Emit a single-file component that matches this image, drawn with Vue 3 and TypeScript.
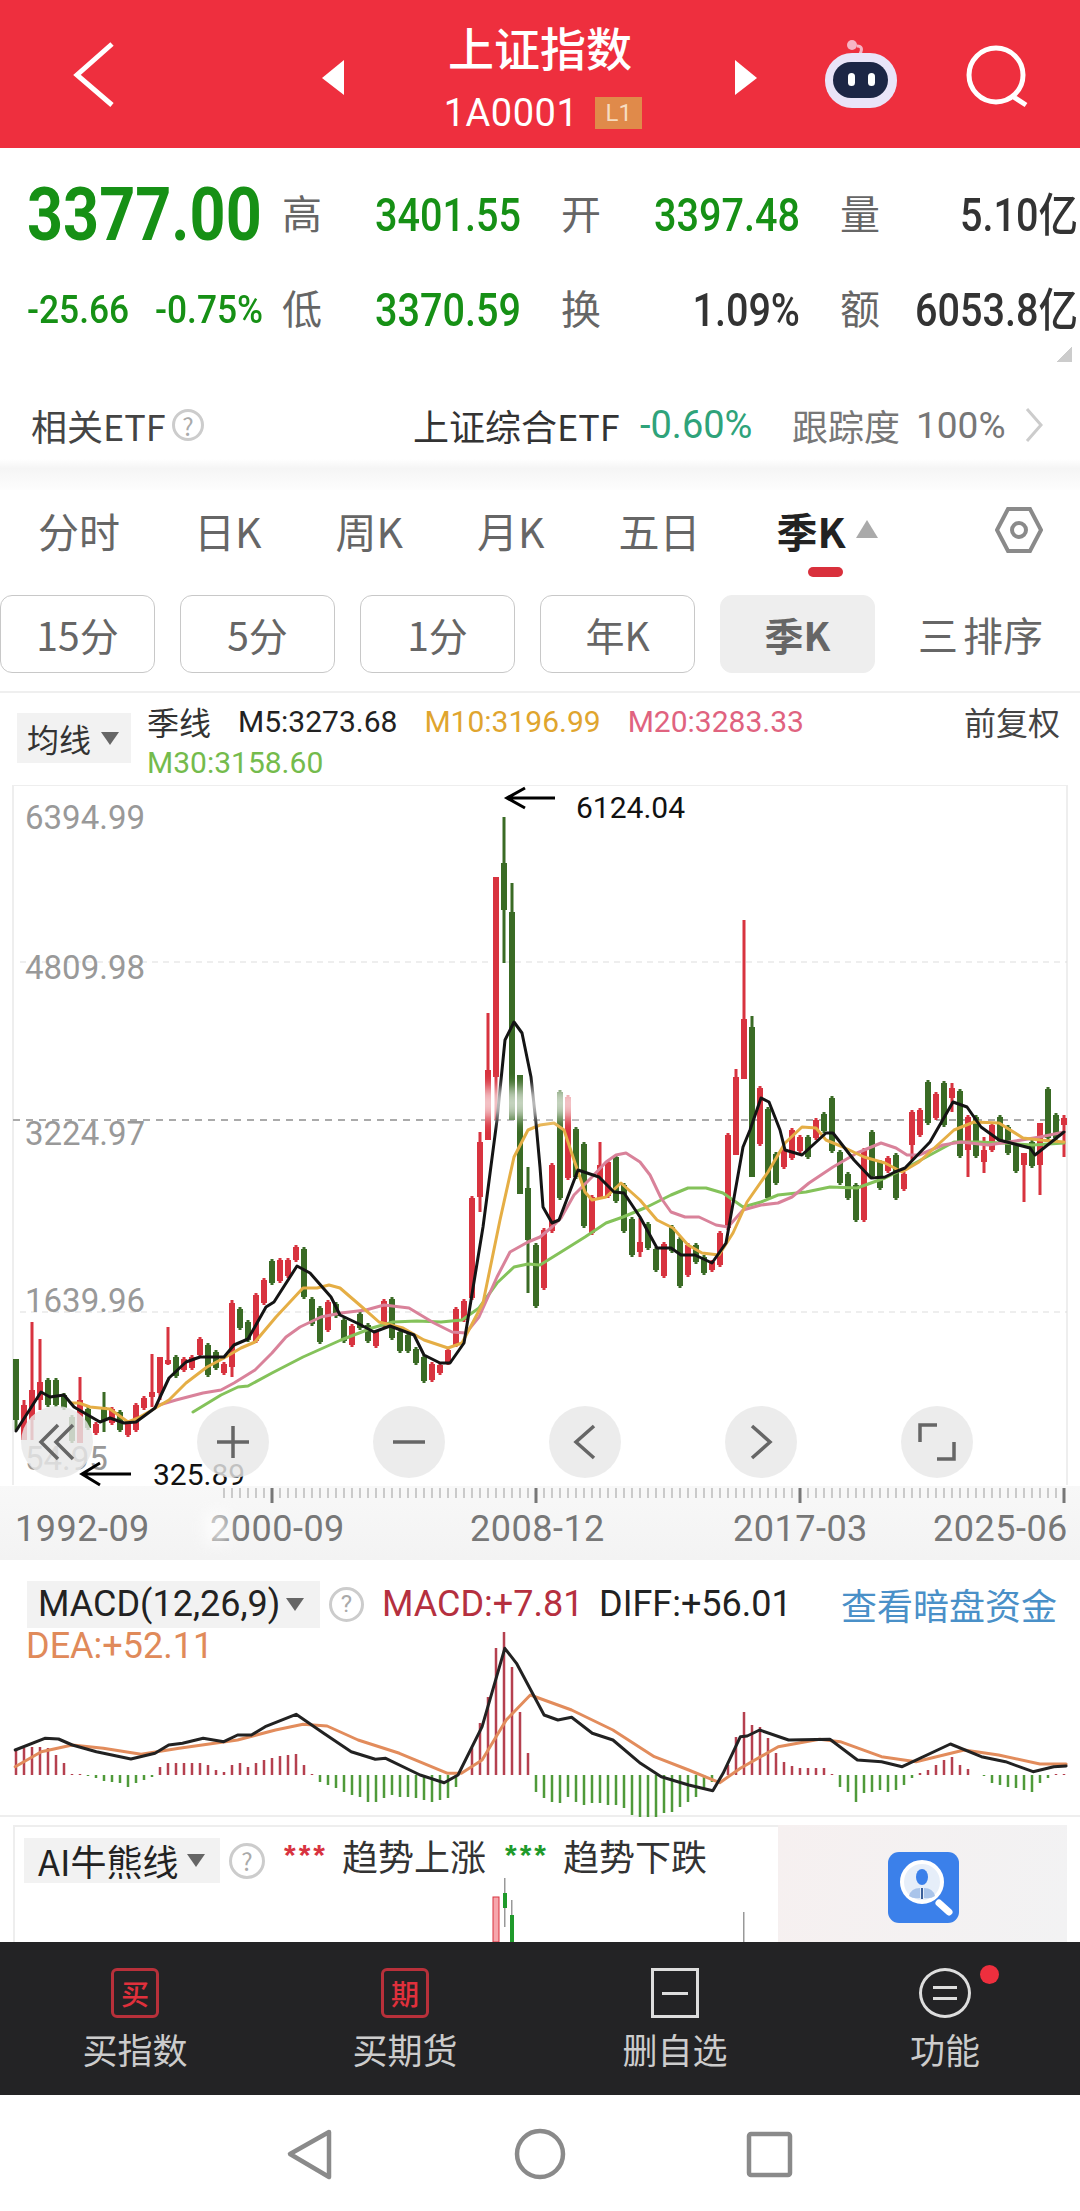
<template>
  <div class="page">
    <header class="top">
      <svg class="top-icons" viewBox="0 0 1080 148">
        <path d="M112 44 L77 75 L112 105" fill="none" stroke="#fff" stroke-width="5" />
        <path d="M344 60 L322 78 L344 95 Z" fill="#fff" />
        <path d="M735 60 L757 78 L735 95 Z" fill="#fff" />
        <path d="M860 54 Q864 46 857 46" fill="none" stroke="#f6b4c4" stroke-width="3" />
        <circle cx="852" cy="45" r="5" fill="#f6b4c4" />
        <rect x="825" y="53" width="72" height="55" rx="27" fill="#e9e4f8" />
        <rect x="833" y="62" width="55" height="36" rx="18" fill="#1c2645" />
        <rect x="848" y="73" width="7" height="13" rx="3.5" fill="#fff" />
        <rect x="868" y="73" width="7" height="13" rx="3.5" fill="#fff" />
        <circle cx="996" cy="75" r="27" fill="none" stroke="#fff" stroke-width="5" />
        <path d="M1012 96 L1026 105" stroke="#fff" stroke-width="5" />
      </svg>
      <div class="title">上证指数</div>
      <div class="code">1A0001<span class="badge">L1</span></div>
    </header>

    <section class="quote">
      <div class="price num">3377.00</div>
      <span class="lbl">高</span><span class="val green num">3401.55</span>
      <span class="lbl">开</span><span class="val green num">3397.48</span>
      <span class="lbl">量</span><span class="val last num">5.10亿</span>
      <div class="change num"><span>-25.66</span><span>-0.75%</span></div>
      <span class="lbl">低</span><span class="val green num">3370.59</span>
      <span class="lbl">换</span><span class="val num">1.09%</span>
      <span class="lbl">额</span><span class="val last num">6053.8亿</span>
      <i class="corner"></i>
    </section>

    <section class="etf">
      <span class="etf-name">相关ETF</span>
      <span class="help small">?</span>
      <span class="etf-main">上证综合ETF</span>
      <span class="etf-pct">-0.60%</span>
      <span class="etf-grey">跟踪度</span>
      <span class="etf-grey">100%</span>
      <svg class="etf-more" viewBox="0 0 20 36"><path d="M3 2 L17 18 L3 34" fill="none" stroke="#ccc" stroke-width="3" /></svg>
    </section>

    <div class="stripe"></div>

    <nav class="tabs">
      <span v-for="t in tabs" :key="t">{{ t }}</span>
      <span class="on">季K<i class="up"></i></span>
      <svg class="hex" viewBox="0 0 48 46">
        <path d="M13 2 H35 L46 23 L35 44 H13 L2 23 Z" fill="none" stroke="#8a8a8a" stroke-width="4" />
        <circle cx="24" cy="23" r="7" fill="none" stroke="#8a8a8a" stroke-width="4" />
      </svg>
    </nav>

    <div class="subtabs">
      <button v-for="t in subTabs" :key="t">{{ t }}</button>
      <button class="active">季K</button>
      <span class="sort"><b>三</b>排序</span>
    </div>

    <section class="legend">
      <span class="drop ma">均线<i class="down"></i></span>
      <div class="ma-values num">
        <span class="cn">季线</span>
        <span>M5:3273.68</span>
        <span class="c-m10">M10:3196.99</span>
        <span class="c-m20">M20:3283.33</span>
        <span class="c-m30">M30:3158.60</span>
      </div>
      <span class="adjust">前复权</span>
    </section>

    <section class="chart">
      <svg class="chart-svg" viewBox="0 785 1080 775">
        <defs>
          <linearGradient id="axisBg" x1="0" y1="0" x2="0" y2="1">
            <stop offset="0" stop-color="#f8f8f8" />
            <stop offset="1" stop-color="#f3f3f3" />
          </linearGradient>
        </defs>
        <rect x="0" y="1486" width="1080" height="74" fill="url(#axisBg)" />
        <path d="M13 785 V1485 M1067 785 V1485 M13 785 H1067" fill="none" stroke="#eee" stroke-width="2" />
        <path d="M20 962 H1067 M20 1312 H1067" stroke="#ddd" stroke-width="1" stroke-dasharray="6 5" />
        <path d="M13 1120 H1067" stroke="#aaa" stroke-width="2" stroke-dasharray="7 6" />

        <text class="axis" x="25" y="829">6394.99</text>
        <text class="axis" x="25" y="979">4809.98</text>
        <text class="axis" x="25" y="1145">3224.97</text>
        <text class="axis" x="25" y="1312">1639.96</text>
        <text class="axis" x="25" y="1470">54.95</text>

        <g v-for="c in bars" :key="c.x" :fill="c.fill">
          <rect :x="c.x - 1.5" :y="c.hi" width="3" :height="c.lo - c.hi" />
          <rect :x="c.x - 3" :y="c.top" width="6" :height="c.bot - c.top" />
        </g>
        <polyline class="line" :points="m30" stroke="#84c25a" />
        <polyline class="line" :points="m20" stroke="#d9829a" />
        <polyline class="line" :points="m10" stroke="#e5ae45" />
        <polyline class="line" :points="m5" stroke="#141414" />

        <rect class="smudge" x="440" y="1088" width="200" height="30" />

        <path v-for="t in ticks" :key="t.x" :d="`M${t.x} 1488 V${t.end}`" :stroke="t.major ? '#777' : '#bbb'" :stroke-width="t.major ? 3 : 1.5" />
        <text class="date" x="15" y="1541">1992-09</text>
        <text class="date" x="210" y="1541">2000-09</text>
        <text class="date" x="470" y="1541">2008-12</text>
        <text class="date" x="733" y="1541">2017-03</text>
        <text class="date" x="933" y="1541">2025-06</text>
        <rect class="smudge" x="205" y="1512" width="24" height="32" />

        <path d="M555 798 H507 M525 788 L507 798 L525 808" fill="none" stroke="#000" stroke-width="3" />
        <text class="note" x="576" y="818">6124.04</text>
        <path d="M131 1474 H82 M100 1463 L82 1474 L100 1485" fill="none" stroke="#000" stroke-width="3" />
        <text class="note" x="153" y="1485">325.89</text>
      </svg>
      <div class="chart-btns">
        <span v-for="b in chartButtons" :key="b">
          <svg viewBox="0 0 40 40"><path :d="b" fill="none" stroke="#666" stroke-width="3.5" /></svg>
        </span>
      </div>
    </section>

    <section class="macd">
      <svg class="macd-svg" viewBox="0 1568 1080 249">
        <rect v-for="b in macdBars" :key="b.x" :x="b.x - 1.25" :y="b.y" width="2.5" :height="b.h" :fill="b.fill" />
        <polyline class="line" :points="dea" stroke="#e28c5c" stroke-width="4" />
        <polyline class="line" :points="diff" stroke="#222" />
      </svg>
      <div class="macd-head num">
        <span class="drop macd-drop">MACD(12,26,9)<i class="down"></i></span>
        <span class="help">?</span>
        <span class="macd-red">MACD:+7.81</span>
        <span class="macd-diff">DIFF:+56.01</span>
        <span class="macd-link">查看暗盘资金</span>
      </div>
      <div class="macd-dea num">DEA:+52.11</div>
    </section>

    <section class="ai">
      <div class="ai-main">
        <svg class="ai-svg" viewBox="0 1825 765 117">
          <rect x="493" y="1897" width="6" height="45" fill="#f6a6ac" stroke="#d8333f" stroke-width="1" />
          <rect x="504" y="1878" width="1.5" height="49" fill="#999" />
          <rect x="503" y="1893" width="4" height="15" fill="#1f9a2b" />
          <rect x="510" y="1915" width="4" height="27" fill="#1f9a2b" />
          <rect x="511" y="1900" width="1.5" height="15" fill="#999" />
          <rect x="743" y="1912" width="1.5" height="30" fill="#999" />
        </svg>
        <div class="ai-head">
          <span class="drop ai-drop">AI牛熊线<i class="down"></i></span>
          <span class="help">?</span>
          <span class="stars red">***</span><span class="trend">趋势上涨</span>
          <span class="stars grn">***</span><span class="trend">趋势下跌</span>
        </div>
      </div>
      <div class="ad">
        <svg viewBox="0 0 71 71">
          <rect width="71" height="71" rx="11" fill="#3b80ea" />
          <path d="M51 51 L61 60" stroke="#fff" stroke-width="7" stroke-linecap="round" />
          <circle cx="34" cy="30" r="20" fill="#e6eef9" stroke="#fff" stroke-width="4" />
          <ellipse cx="34" cy="25" rx="6" ry="8" fill="#3b80ea" />
          <path d="M21 44 Q23 36 32 36 V46 Q25 47 21 44 Z M36 36 Q45 36 47 44 Q43 47 36 46 Z" fill="#a9c4ea" />
          <rect x="33" y="36" width="2" height="11" fill="#3b5f9a" />
        </svg>
      </div>
    </section>

    <footer class="actions">
      <div class="action">
        <span class="act-icon buy">买</span>
        <span>买指数</span>
      </div>
      <div class="action">
        <span class="act-icon buy">期</span>
        <span>买期货</span>
      </div>
      <div class="action">
        <span class="act-icon del"><i></i></span>
        <span>删自选</span>
      </div>
      <div class="action">
        <span class="act-icon fn"><i></i><i></i><em></em></span>
        <span>功能</span>
      </div>
    </footer>

    <div class="sysnav">
      <svg viewBox="0 0 1080 116">
        <path d="M329 37 L290 59 L329 82 Z" fill="none" stroke="#8a8a8a" stroke-width="4.5" stroke-linejoin="round" />
        <circle cx="540" cy="59" r="23" fill="none" stroke="#8a8a8a" stroke-width="4.5" />
        <rect x="749" y="39" width="41" height="41" rx="2" fill="none" stroke="#8a8a8a" stroke-width="4.5" />
      </svg>
    </div>
  </div>
</template>

<script setup lang="ts">
type Candle = [number, number, number, number?, number?]

const tabs = ['分时', '日K', '周K', '月K', '五日']
const subTabs = ['15分', '5分', '1分', '年K']

// [1 red / 0 green, wick top, wick bottom, body top, body bottom], y in page px
const candles: Candle[] = [
  [0, 1359, 1430, 1359, 1420], [1, 1400, 1440, 1405, 1440], [1, 1322, 1440, 1390, 1420], [1, 1339, 1410, 1382, 1400],
  [0, 1378, 1407], [0, 1378, 1407], [0, 1393, 1410], [0, 1415, 1443], [1, 1377, 1443, 1400, 1443], [0, 1407, 1430],
  [1, 1422, 1435], [0, 1392, 1432, 1407, 1420], [1, 1407, 1425], [0, 1410, 1432], [1, 1422, 1437], [1, 1403, 1432],
  [1, 1396, 1410], [1, 1354, 1407, 1392, 1397], [1, 1357, 1400, 1357, 1393], [1, 1327, 1365, 1360, 1364], [0, 1355, 1378],
  [1, 1357, 1372], [1, 1355, 1370], [1, 1337, 1357], [0, 1343, 1377], [0, 1350, 1370], [1, 1362, 1375], [1, 1300, 1377, 1303, 1367],
  [0, 1307, 1330], [0, 1320, 1342], [1, 1293, 1343], [1, 1278, 1305], [0, 1259, 1285], [1, 1258, 1283], [1, 1258, 1278], [1, 1245, 1262],
  [0, 1247, 1299], [0, 1297, 1326], [0, 1306, 1344], [1, 1300, 1332], [0, 1302, 1318], [0, 1318, 1343], [1, 1324, 1347], [0, 1312, 1330],
  [0, 1323, 1343], [1, 1330, 1348], [1, 1299, 1327], [0, 1297, 1340], [0, 1330, 1353], [0, 1333, 1353], [0, 1347, 1365], [0, 1355, 1383],
  [1, 1362, 1382], [1, 1363, 1375], [1, 1348, 1365], [1, 1307, 1347], [1, 1299, 1322], [1, 1196, 1300], [1, 1132, 1212, 1142, 1197],
  [1, 1013, 1140, 1070, 1140], [1, 877, 1120, 877, 1077], [0, 817, 963, 863, 910], [0, 883, 1120, 912, 1120], [0, 1075, 1194, 1075, 1194],
  [0, 1167, 1293, 1188, 1240], [0, 1243, 1308], [1, 1228, 1290], [1, 1163, 1233], [0, 1090, 1200], [1, 1095, 1180], [0, 1127, 1179],
  [0, 1142, 1228], [1, 1195, 1235], [1, 1142, 1198, 1165, 1198], [1, 1160, 1198], [0, 1155, 1203], [0, 1183, 1233], [0, 1217, 1257],
  [1, 1218, 1257, 1242, 1252], [0, 1222, 1250], [0, 1247, 1272], [1, 1242, 1278], [0, 1225, 1253], [0, 1237, 1288], [1, 1243, 1277],
  [0, 1243, 1264], [0, 1255, 1275], [1, 1260, 1272], [1, 1231, 1267], [1, 1133, 1230], [1, 1069, 1155, 1077, 1155], [1, 920, 1079, 1019, 1079],
  [0, 1016, 1177, 1027, 1177], [1, 1086, 1146], [0, 1107, 1200], [0, 1152, 1185], [1, 1148, 1169], [1, 1128, 1160], [1, 1135, 1153],
  [0, 1135, 1159], [1, 1118, 1140], [0, 1112, 1133], [0, 1096, 1153], [0, 1150, 1185], [0, 1172, 1200], [0, 1183, 1222], [1, 1148, 1222],
  [0, 1130, 1178], [0, 1160, 1190], [1, 1156, 1173], [0, 1153, 1200], [1, 1172, 1191], [1, 1110, 1160, 1112, 1145], [1, 1108, 1137],
  [0, 1080, 1125], [1, 1092, 1120], [0, 1081, 1127], [1, 1083, 1112, 1088, 1098], [0, 1089, 1158], [1, 1115, 1177, 1117, 1150], [0, 1115, 1158],
  [1, 1137, 1173, 1150, 1162], [1, 1123, 1152], [0, 1115, 1143], [0, 1125, 1155], [0, 1143, 1173], [1, 1153, 1202, 1153, 1165],
  [0, 1140, 1168], [1, 1123, 1195, 1123, 1165], [0, 1087, 1140], [0, 1113, 1140], [1, 1115, 1157, 1118, 1125]
]

const bars = candles.map(([up, hi, lo, top, bot], i) => ({
  x: 16 + 8 * i,
  fill: up ? '#d8333f' : '#3a6b25',
  hi,
  lo,
  top: top ?? hi + 2,
  bot: bot ?? lo - 2
}))

const m5 = '16,1431 41,1392 50,1397 64,1395 74,1407 100,1422 110,1418 124,1423 136,1422 155,1408 169,1378 186,1362 200,1357 224,1357 234,1345 248,1339 266,1307 274,1302 297,1266 310,1273 331,1297 340,1315 359,1324 374,1332 390,1326 414,1335 424,1355 440,1363 450,1363 464,1343 483,1227 497,1120 505,1040 514,1022 522,1033 531,1077 536,1123 540,1167 543,1207 552,1223 559,1220 578,1170 599,1177 614,1192 624,1193 640,1217 657,1248 671,1248 681,1255 695,1255 712,1263 726,1243 743,1147 750,1130 761,1098 769,1102 780,1130 785,1150 802,1155 826,1133 833,1133 854,1160 871,1178 885,1177 895,1172 905,1168 930,1142 953,1102 967,1107 981,1127 999,1140 1030,1148 1035,1155 1064,1132'
const m10 = '71,1403 79,1403 90,1407 110,1409 128,1422 138,1418 152,1410 169,1400 186,1383 207,1367 224,1358 241,1348 255,1342 276,1317 303,1288 317,1288 329,1285 340,1288 362,1307 379,1322 403,1328 424,1340 448,1348 462,1343 483,1303 500,1220 514,1157 528,1130 540,1125 554,1123 564,1130 574,1160 585,1192 592,1200 606,1197 621,1183 640,1200 657,1220 673,1228 688,1245 702,1253 719,1255 733,1233 747,1202 768,1172 785,1143 802,1127 816,1128 826,1140 843,1147 864,1157 885,1163 902,1172 919,1162 954,1130 974,1122 999,1123 1023,1138 1040,1140 1064,1142'
const m20 = '159,1405 176,1400 203,1393 221,1390 234,1383 255,1370 272,1353 286,1337 300,1327 321,1317 341,1313 366,1310 384,1305 409,1308 434,1323 452,1332 466,1333 479,1317 497,1277 510,1252 528,1242 540,1237 552,1227 561,1218 574,1195 592,1177 606,1162 616,1155 626,1153 640,1162 650,1175 661,1198 671,1212 685,1217 699,1217 716,1225 728,1227 743,1210 761,1205 778,1203 792,1197 809,1183 833,1167 857,1153 881,1143 896,1148 907,1155 919,1155 943,1145 961,1142 988,1145 1009,1142 1040,1137 1064,1132'
const m30 = '193,1412 221,1395 238,1387 248,1386 272,1373 303,1357 341,1340 372,1328 393,1322 417,1321 441,1322 462,1320 479,1308 497,1283 514,1267 528,1264 540,1265 561,1252 585,1237 606,1223 623,1217 647,1207 671,1195 688,1188 706,1188 723,1193 743,1207 761,1202 778,1195 806,1192 830,1187 857,1188 885,1178 906,1168 930,1155 954,1142 978,1142 1002,1143 1033,1145 1064,1143'

const ticks = Array.from({ length: 106 }, (_, i) => {
  const x = 224 + 8 * i
  const major = x === 272 || x === 536 || x === 800 || x === 1064
  return { x, major, end: major ? 1503 : 1498 }
})

const chartButtons = [
  'M21 3 L4 20 L21 37 M36 3 L19 20 L36 37',
  'M20 4 V36 M4 20 H36',
  'M4 20 H36',
  'M29 4 L11 20 L29 36',
  'M11 4 L29 20 L11 36',
  'M3 20 V3 H20 M37 20 V37 H20'
]

const macdValues = [
  25, 27, 28, 28, 27, 20, 12, 1, 1, -1, -3, -6, -7, -8, -12, -8, -5, -2, 8, 12, 12, 12, 12, 12, 10, 5, 3, 10, 12, 8, 12, 15, 17,
  19, 20, 21, 10, 1, -7, -10, -13, -17, -20, -22, -27, -27, -23, -20, -22, -22, -23, -25, -27, -25, -23, -12, 0, 27, 52, 78, 127,
  143, 108, 63, 22, -17, -23, -27, -28, -22, -27, -30, -28, -28, -30, -30, -33, -40, -42, -42, -42, -38, -37, -32, -27, -22, -15,
  -7, 0, 10, 38, 63, 50, 48, 37, 22, 13, 9, 7, 7, 7, 7, 1, -12, -17, -27, -18, -17, -15, -17, -15, -10, -3, 2, 5, 10, 15, 18, 10,
  6, 0, -1, -8, -10, -12, -13, -15, -17, -8, -3, 1, 1
]

const macdBars = macdValues.map((v, i) => ({
  x: 16 + 8 * i,
  y: v > 0 ? 1775 - v : 1775,
  h: Math.abs(v),
  fill: v > 0 ? '#b5404f' : '#4f9a3a'
}))

// traced on a crop that is 1.452x wide and 3x tall, starting at y 1560
const toPage = (pts: number[][]) =>
  pts.map(([x, y]) => `${(x / 1.452).toFixed(1)},${(1560 + y / 3).toFixed(1)}`).join(' ')

const diff = toPage([
  [22, 570], [65, 535], [85, 537], [105, 555], [140, 575], [190, 597], [225, 580], [245, 555], [265, 550], [295, 535], [325, 545],
  [345, 525], [365, 525], [385, 500], [430, 463], [470, 520], [510, 575], [545, 598], [560, 595], [610, 645], [645, 668], [665, 645],
  [700, 500], [733, 265], [750, 310], [790, 465], [810, 480], [830, 472], [860, 520], [890, 540], [930, 610], [960, 650], [1000, 675],
  [1035, 692], [1050, 640], [1075, 530], [1085, 528], [1103, 510], [1145, 540], [1205, 538], [1245, 600], [1280, 605], [1310, 620],
  [1380, 552], [1425, 590], [1460, 605], [1500, 635], [1530, 620], [1548, 618]
])
const dea = toPage([
  [22, 620], [60, 575], [105, 555], [150, 565], [205, 583], [260, 565], [345, 540], [400, 510], [440, 493], [475, 498], [520, 540],
  [580, 580], [650, 640], [670, 640], [700, 600], [735, 480], [770, 405], [830, 450], [890, 510], [950, 590], [1000, 630], [1045, 668],
  [1075, 625], [1130, 560], [1190, 538], [1220, 545], [1280, 590], [1330, 605], [1400, 570], [1450, 585], [1510, 612], [1548, 612]
])
</script>

<style>
html,
body {
  margin: 0;
  background: #fff;
}
</style>

<style scoped>
.page {
  width: 1080px;
  height: 2211px;
  overflow: hidden;
  display: flex;
  flex-direction: column;
  background: #fff;
  font-family: 'Noto Sans CJK SC', 'Liberation Sans', sans-serif;
  color: #333;
}
.num {
  font-family: Roboto, 'Noto Sans CJK SC', sans-serif;
}
i,
em {
  font-style: normal;
}

.top {
  position: relative;
  height: 148px;
  flex: none;
  background: #ee2f3e;
  color: #fff;
  text-align: center;
}
.top-icons {
  position: absolute;
  inset: 0;
  width: 100%;
  height: 100%;
}
.title {
  position: relative;
  padding-top: 14px;
  font-size: 46px;
  line-height: 64px;
  font-weight: 500;
}
.code {
  position: relative;
  display: flex;
  justify-content: center;
  align-items: center;
  gap: 17px;
  margin-top: 12px;
  padding-left: 6px;
  font-family: Roboto, sans-serif;
  font-size: 38px;
  line-height: 46px;
  letter-spacing: 0.5px;
}
.badge {
  width: 47px;
  height: 32px;
  background: #e08a4a;
  color: #f7dcc0;
  font-size: 24px;
  line-height: 32px;
  letter-spacing: 0;
}

.quote {
  position: relative;
  height: 243px;
  flex: none;
  box-sizing: border-box;
  padding: 19px 2px 0 27px;
  display: grid;
  grid-template-columns: 255px 40px 239px 40px 239px 41px 1fr;
  grid-template-rows: 95px 95px;
  align-items: center;
}
.price {
  font-size: 74px;
  font-weight: 700;
  color: #169015;
  white-space: nowrap;
  transform: scaleX(0.85);
  transform-origin: left;
}
.lbl {
  font-size: 40px;
  color: #666;
  margin-bottom: 6px;
}
.val {
  font-size: 46px;
  line-height: 1;
  font-weight: 500;
  text-align: right;
  margin-right: 40px;
  color: #333;
  white-space: nowrap;
  transform: scaleX(0.86);
  transform-origin: right;
}
.val.last {
  margin-right: 0;
}
.val.green {
  color: #169015;
}
.change {
  position: relative;
  height: 44px;
  font-size: 38px;
  font-weight: 500;
  color: #169015;
  white-space: nowrap;
}
.change span {
  position: absolute;
  left: 0;
  transform: scaleX(0.93);
  transform-origin: left;
}
.change span + span {
  left: 128px;
}
.corner {
  position: absolute;
  right: 8px;
  top: 199px;
  width: 15px;
  height: 15px;
  background: linear-gradient(135deg, transparent 50%, #ccc 50%);
}

.etf {
  height: 68px;
  flex: none;
  display: flex;
  align-items: center;
  padding-left: 31px;
  font-size: 36px;
  white-space: nowrap;
}
.etf-name {
  width: 141px;
  color: #444;
}
.help {
  width: 32px;
  height: 32px;
  border: 3px solid #ccc;
  border-radius: 50%;
  box-sizing: border-box;
  display: inline-flex;
  align-items: center;
  justify-content: center;
  font-size: 24px;
  color: #aaa;
  flex: none;
}
.etf-main {
  margin-left: 209px;
  width: 227px;
  color: #333;
}
.etf-pct {
  width: 152px;
  font-family: Roboto, sans-serif;
  font-size: 38px;
  color: #2fa37a;
}
.etf-grey {
  color: #777;
  width: 124px;
  font-family: Roboto, 'Noto Sans CJK SC', sans-serif;
}
.etf-grey + .etf-grey {
  width: 108px;
  font-size: 37px;
}
.etf-more {
  width: 20px;
  height: 36px;
}

.stripe {
  height: 31px;
  flex: none;
  background: linear-gradient(#fff, #f5f5f5 30%, #fdfdfd);
}

.tabs {
  position: relative;
  height: 105px;
  flex: none;
  box-sizing: border-box;
  padding: 12px 0 0 38px;
  display: flex;
  align-items: flex-start;
  gap: 74px;
  font-size: 41px;
  line-height: 56px;
  color: #666;
}
.tabs .on {
  position: relative;
  margin-left: 2px;
  color: #222;
  font-weight: 700;
}
.tabs .on::after {
  content: '';
  position: absolute;
  left: 31px;
  top: 65px;
  width: 35px;
  height: 10px;
  border-radius: 5px;
  background: #d9303c;
}
.up {
  position: absolute;
  left: 79px;
  top: 18px;
  border: 11px solid transparent;
  border-top: 0;
  border-bottom: 18px solid #aaa;
}
.hex {
  position: absolute;
  left: 995px;
  top: 17px;
  width: 48px;
  height: 46px;
}

.subtabs {
  height: 78px;
  flex: none;
  display: flex;
  align-items: center;
  gap: 25px;
}
.subtabs button {
  width: 155px;
  height: 78px;
  box-sizing: border-box;
  border: 1.5px solid #c8c8c8;
  border-radius: 12px;
  background: #fff;
  padding: 0;
  font-family: inherit;
  font-size: 39px;
  color: #666;
}
.subtabs .active {
  border-color: #eee;
  background: #eee;
  font-weight: 700;
}
.sort {
  margin-left: 18px;
  font-size: 40px;
  color: #666;
  white-space: nowrap;
}
.sort b {
  font-weight: 400;
  margin-right: 5px;
}

.legend {
  position: relative;
  height: 94px;
  flex: none;
  margin-top: 18px;
  border-top: 2px solid #efefef;
  box-sizing: border-box;
  display: flex;
  align-items: flex-start;
  padding: 20px 0 0 17px;
  font-size: 34px;
}
.drop {
  position: relative;
  display: flex;
  align-items: center;
  box-sizing: border-box;
  background: #f2f2f2;
  color: #333;
  flex: none;
}
.down {
  border: 9px solid transparent;
  border-bottom: 0;
  border-top: 13px solid #666;
}
.ma {
  width: 114px;
  height: 50px;
  gap: 10px;
  padding-left: 10px;
  font-size: 32px;
}
.ma-values {
  position: absolute;
  left: 147px;
  top: 8px;
  width: 680px;
  display: flex;
  flex-wrap: wrap;
  gap: 0 27px;
  font-size: 30px;
  line-height: 41px;
  color: #222;
}
.ma-values .cn {
  font-family: 'Noto Sans CJK SC', sans-serif;
  font-size: 32px;
  color: #333;
}
.c-m10 {
  color: #e0a52e;
}
.c-m20 {
  color: #e0637f;
}
.c-m30 {
  flex-basis: 100%;
  color: #74bb4c;
}
.adjust {
  position: absolute;
  left: 964px;
  top: 8px;
  font-size: 32px;
  line-height: 41px;
  color: #444;
}

.chart {
  position: relative;
  height: 775px;
  flex: none;
  margin-top: 0;
}
.chart-svg {
  display: block;
  width: 1080px;
  height: 775px;
}
.line {
  fill: none;
  stroke-width: 3;
  stroke-linejoin: round;
  stroke-linecap: round;
}
.smudge {
  fill: #fff;
  opacity: 0.7;
  filter: blur(7px);
}
.axis {
  font-family: Roboto, sans-serif;
  font-size: 33px;
  fill: #999;
}
.date {
  font-family: Roboto, sans-serif;
  font-size: 36px;
  letter-spacing: 0.5px;
  fill: #777;
}
.note {
  font-family: Roboto, sans-serif;
  font-size: 30px;
  fill: #111;
}
.chart-btns {
  position: absolute;
  left: 21px;
  top: 621px;
  width: 952px;
  display: flex;
  justify-content: space-between;
}
.chart-btns span {
  width: 72px;
  height: 72px;
  border-radius: 50%;
  background: rgba(232, 232, 232, 0.82);
  display: flex;
  align-items: center;
  justify-content: center;
}
.chart-btns svg {
  width: 40px;
  height: 40px;
}

.macd {
  position: relative;
  height: 249px;
  flex: none;
  margin-top: 8px;
  border-bottom: 2px solid #eee;
  box-sizing: border-box;
}
.macd-svg {
  position: absolute;
  inset: 0;
  width: 1080px;
  height: 249px;
}
.macd-head {
  position: relative;
  display: flex;
  align-items: center;
  padding: 10px 0 0 27px;
  font-size: 36px;
  white-space: nowrap;
}
.macd-drop {
  width: 293px;
  height: 47px;
  padding-left: 11px;
  gap: 6px;
  font-size: 36px;
  color: #222;
}
.macd-head .help {
  margin-left: 9px;
  width: 35px;
  height: 35px;
}
.macd-red {
  margin-left: 18px;
  width: 217px;
  color: #b5303f;
}
.macd-diff {
  width: 242px;
  color: #222;
}
.macd-link {
  font-family: 'Noto Sans CJK SC', sans-serif;
  font-size: 36px;
  color: #4a90c8;
}
.macd-dea {
  position: relative;
  margin: -2px 0 0 26px;
  font-size: 36px;
  line-height: 36px;
  color: #e08a5a;
}

.ai {
  position: relative;
  height: 117px;
  flex: none;
  margin: 8px 13px 0;
  display: flex;
  overflow: hidden;
}
.ai-main {
  position: relative;
  width: 765px;
  border-top: 2px solid #eee;
  border-left: 2px solid #eee;
  box-sizing: border-box;
}
.ai-svg {
  position: absolute;
  left: -15px;
  top: -2px;
  width: 765px;
  height: 117px;
}
.ai-head {
  position: relative;
  display: flex;
  align-items: flex-start;
  padding-left: 9px;
  font-size: 36px;
  line-height: 52px;
  color: #333;
  white-space: nowrap;
}
.ai-drop {
  width: 196px;
  height: 45px;
  margin-top: 11px;
  padding-left: 14px;
  gap: 9px;
  font-size: 36px;
  line-height: 45px;
  color: #222;
}
.ai-head .help {
  margin: 16px 19px 0 9px;
  width: 36px;
  height: 36px;
}
.trend {
  margin-top: 2px;
}
.stars {
  width: 58px;
  margin-top: 2px;
  font-family: 'Liberation Sans', sans-serif;
  font-weight: 700;
  letter-spacing: 3px;
  font-size: 30px;
}
.stars.red {
  color: #d8333f;
}
.stars.grn {
  margin-left: 19px;
  color: #1f9a2b;
}
.ad {
  flex: 1;
  background: linear-gradient(100deg, #f6f0f0, #f2f2f3);
  display: flex;
  justify-content: center;
  padding: 27px 0 0 0;
  box-sizing: border-box;
}
.ad svg {
  width: 71px;
  height: 71px;
  margin-left: 1px;
}

.actions {
  height: 153px;
  flex: none;
  background: #232325;
  display: grid;
  grid-template-columns: repeat(4, 270px);
  color: #ccc;
  font-size: 35px;
}
.action {
  display: flex;
  flex-direction: column;
  align-items: center;
  padding-top: 26px;
  line-height: 50px;
}
.act-icon {
  position: relative;
  width: 48px;
  height: 50px;
  box-sizing: border-box;
  margin-bottom: 6px;
  display: flex;
  flex-direction: column;
  align-items: center;
  justify-content: center;
  gap: 8px;
}
.buy {
  border: 3px solid #b8303a;
  border-radius: 6px;
  color: #e0303c;
  font-size: 28px;
  line-height: 1;
  font-weight: 500;
}
.del {
  border: 3px solid #ddd;
}
.del i {
  width: 26px;
  height: 3px;
  background: #ddd;
}
.fn {
  width: 52px;
  border: 3px solid #ddd;
  border-radius: 50%;
}
.fn i {
  width: 24px;
  height: 3px;
  background: #ddd;
}
.fn em {
  position: absolute;
  left: 58px;
  top: -6px;
  width: 19px;
  height: 19px;
  border-radius: 50%;
  background: #ee2f3e;
}

.sysnav {
  height: 116px;
  flex: none;
  background: #fff;
}
.sysnav svg {
  display: block;
  width: 1080px;
  height: 116px;
}
</style>
